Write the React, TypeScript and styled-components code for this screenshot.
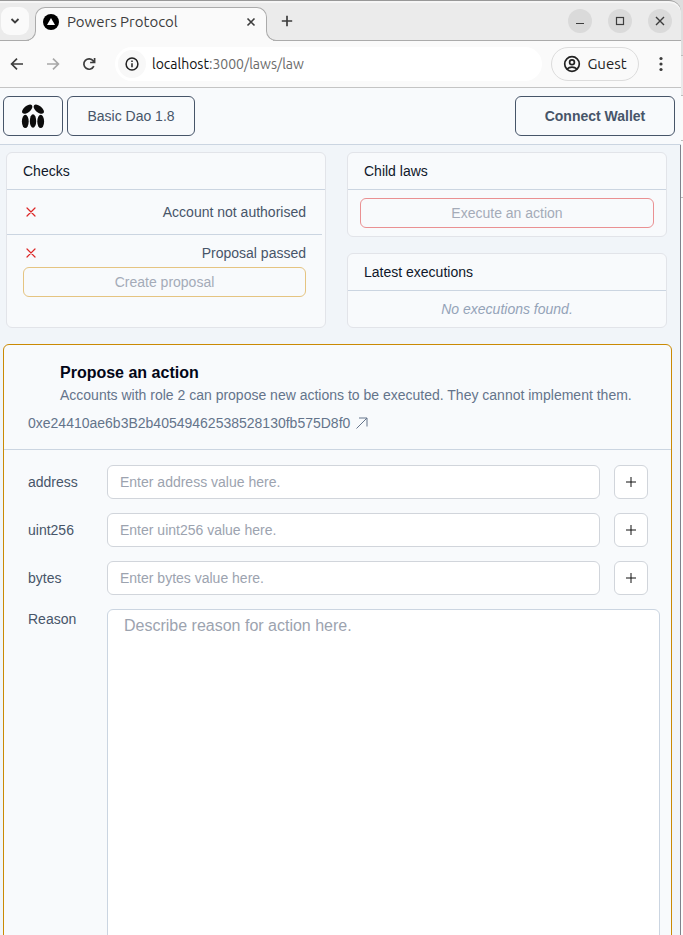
import React from "react";
import styled, { createGlobalStyle, css } from "styled-components";

const slate = {
  50: "#f8fafc",
  100: "#f1f5f9",
  300: "#cbd5e1",
  400: "#94a3b8",
  500: "#64748b",
  600: "#475569",
};
const chrome = {
  strip: "#ebebeb",
  line: "#ababab",
  surface: "#fafafa",
  ink: "#3d3d3d",
};

const GlobalStyle = createGlobalStyle`
  *, *::before, *::after { box-sizing: border-box; }
  body {
    margin: 0;
    background: #fcfcfc;
    font-family: "Liberation Sans", Arial, sans-serif;
    font-size: 14px;
    line-height: 20px;
  }
  button, input, textarea { font: inherit; margin: 0; }
  button { cursor: pointer; padding: 0; }
  h1, h2, p { margin: 0; }
  svg { display: block; flex: none; }
`;

const Desktop = styled.div`
  display: flex;
  height: 100vh;
  overflow: hidden;
  background: #dedede;
`;

const BrowserWindow = styled.div`
  flex: 1;
  min-width: 0;
  display: flex;
  flex-direction: column;
`;

const NeighbourWindow = styled.div`
  width: 2px;
  display: flex;
  flex-direction: column;
  padding-top: 55px;
`;

const NeighbourBand = styled.div<{ $height?: number; $color: string }>`
  ${(p) => (p.$height ? `height: ${p.$height}px;` : "flex: 1;")}
  border-top: 1px solid #bdbdbd;
  background: ${(p) => p.$color};
`;

const BrowserChrome = styled.header`
  font-family: Ubuntu, "Noto Sans", sans-serif;
  color: ${chrome.ink};
  flex: none;
`;

const TabStrip = styled.div`
  display: flex;
  align-items: center;
  height: 41px;
  padding-right: 9px;
  background: ${chrome.strip};
  border-top: 1px solid #989898;
  border-bottom: 1px solid ${chrome.line};
  border-top-right-radius: 12px;
  box-shadow: inset 0 2px 0 #f6f6f6;
`;

const iconButton = css`
  display: flex;
  align-items: center;
  justify-content: center;
  border: 0;
  color: inherit;
  background: transparent;
`;

const TabSearch = styled.button`
  ${iconButton}
  position: relative;
  z-index: 1;
  width: 28px;
  height: 28px;
  margin-left: 1px;
  border-radius: 9px;
  background: ${chrome.surface};
`;

const Tab = styled.div`
  position: relative;
  align-self: flex-end;
  display: flex;
  align-items: center;
  gap: 8px;
  width: 232px;
  height: 34px;
  margin: 0 0 -1px 6px;
  padding: 0 8px 6px 7px;
  font-size: 15px;
  background: ${chrome.surface};
  border: 1px solid ${chrome.line};
  border-bottom: 0;
  border-radius: 10px 10px 0 0;

  &::before,
  &::after {
    content: "";
    position: absolute;
    bottom: 0;
    width: 11px;
    height: 14px;
    background: ${chrome.strip};
    border-bottom: 1px solid ${chrome.line};
  }
  &::before {
    right: 100%;
    border-right: 1px solid ${chrome.line};
    border-bottom-right-radius: 10px;
    box-shadow: 4px 4px 0 ${chrome.surface};
  }
  &::after {
    left: 100%;
    border-left: 1px solid ${chrome.line};
    border-bottom-left-radius: 10px;
    box-shadow: -4px 4px 0 ${chrome.surface};
  }
`;

const TabTitle = styled.span`
  flex: 1;
  white-space: nowrap;
`;

const GlyphButton = styled.button<{ $size?: number; $muted?: boolean }>`
  ${iconButton}
  flex: none;
  width: ${(p) => p.$size ?? 28}px;
  height: ${(p) => p.$size ?? 28}px;
  border-radius: 50%;
  color: ${(p) => (p.$muted ? "#a8a8a8" : "inherit")};
`;

const WindowControls = styled.div`
  display: flex;
  gap: 16px;
  margin-left: auto;
`;

const WindowControl = styled.button`
  ${iconButton}
  width: 24px;
  height: 24px;
  border-radius: 50%;
  background: #dadada;
`;

const Toolbar = styled.div`
  display: flex;
  align-items: center;
  height: 47px;
  padding: 0 6px 0 3px;
  background: ${chrome.surface};
  border-bottom: 1px solid #c4c4c4;
`;

const NavButtons = styled.div`
  display: flex;
  gap: 8px;
  margin-right: 12px;
`;

const AddressBar = styled.div`
  flex: 1;
  min-width: 0;
  display: flex;
  align-items: center;
  gap: 6px;
  height: 34px;
  padding: 0 3px;
  border-radius: 17px;
  background: #fff;
  font-size: 14px;
  color: #6b6b6b;
`;

const SiteInfo = styled(GlyphButton)`
  background: #f8f8f8;
  color: #222;
`;

const Host = styled.span`
  color: #111;
`;

const GuestButton = styled.button`
  ${iconButton}
  gap: 6px;
  width: 88px;
  height: 34px;
  margin: 0 8px 0 9px;
  border: 1px solid #dcdcdc;
  border-radius: 17px;
  font-size: 15px;
  color: #222;
`;

const Page = styled.div`
  flex: 1;
  min-height: 0;
  display: flex;
  flex-direction: column;
  overflow: hidden;
  background: ${slate[100]};
`;

const AppBar = styled.nav`
  flex: none;
  display: flex;
  align-items: center;
  gap: 4px;
  height: 57px;
  padding: 0 6px 0 3px;
  background: ${slate[50]};
  border-bottom: 1px solid ${slate[300]};
`;

const NavButton = styled.button<{ $width: number; $strong?: boolean }>`
  display: flex;
  align-items: center;
  justify-content: center;
  width: ${(p) => p.$width}px;
  height: 40px;
  border: 1px solid ${slate[600]};
  border-radius: 6px;
  background: transparent;
  color: ${slate[600]};
  font-weight: ${(p) => (p.$strong ? 700 : 400)};
  margin-left: ${(p) => (p.$strong ? "auto" : "0")};
`;

const Content = styled.main`
  flex: 1;
  min-height: 0;
  padding: 7px 8px 0 3px;
  border-right: 1px solid #80828c;
`;

const Overview = styled.div`
  display: grid;
  grid-template-columns: 1fr 1fr;
  gap: 21px;
  padding: 0 5px 0 3px;
  margin-bottom: 16px;
`;

const Stack = styled.div`
  display: flex;
  flex-direction: column;
  gap: 16px;
`;

const Card = styled.section`
  background: ${slate[50]};
  border: 1px solid #e2e4e9;
  border-radius: 6px;
`;

const CardTitle = styled.h2`
  height: 37px;
  padding: 8px 16px;
  border-bottom: 1px solid ${slate[300]};
  font-size: 14px;
  font-weight: 400;
  color: #0f172a;
`;

const CheckItem = styled.div<{ $divided?: boolean }>`
  margin-right: 3px;
  padding: ${(p) => (p.$divided ? "12px 16px" : "8px 16px")};
  border-bottom: ${(p) => (p.$divided ? `1px solid ${slate[300]}` : "0")};
`;

const CheckLine = styled.div`
  display: flex;
  align-items: center;
  justify-content: space-between;
  height: 20px;
  color: ${slate[600]};
`;

const ActionButton = styled.button<{ $color: string }>`
  display: block;
  width: 100%;
  height: 30px;
  border: 1px solid ${(p) => p.$color};
  border-radius: 6px;
  background: transparent;
  color: #a4abb8;
`;

const CheckAction = styled.div`
  margin-top: 4px;
`;

const ChildLaws = styled.div`
  padding: 8px 12px;
`;

const EmptyNote = styled.p`
  padding: 8px;
  text-align: center;
  font-style: italic;
  color: ${slate[400]};
`;

const LawCard = styled.section`
  background: ${slate[50]};
  border: 1px solid #ca8a04;
  border-radius: 6px;
`;

const LawHeader = styled.div`
  height: 105px;
  padding: 16px 24px;
  border-bottom: 1px solid ${slate[300]};
  color: ${slate[500]};
`;

const LawSummary = styled.div`
  padding-left: 32px;
  margin-bottom: 8px;
`;

const LawTitle = styled.h1`
  font-size: 16px;
  line-height: 24px;
  font-weight: 700;
  color: #020617;
`;

const ContractLink = styled.a`
  display: inline-flex;
  align-items: center;
  gap: 6px;
  color: inherit;
  text-decoration: none;
`;

const Form = styled.form`
  display: flex;
  flex-direction: column;
  gap: 14px;
  padding: 15px 11px 16px 24px;
`;

const Field = styled.div<{ $tall?: boolean }>`
  display: flex;
  align-items: ${(p) => (p.$tall ? "flex-start" : "center")};
  padding-right: ${(p) => (p.$tall ? 0 : 12)}px;
`;

const FieldLabel = styled.label`
  flex: none;
  width: 79px;
  color: ${slate[600]};
`;

const TextField = styled.input`
  flex: 1;
  min-width: 0;
  height: 34px;
  padding: 0 12px;
  border: 1px solid #d1d5db;
  border-radius: 6px;
  background: #fff;
  &::placeholder { color: #9ca3af; opacity: 1; }
`;

const AddButton = styled.button`
  ${iconButton}
  flex: none;
  width: 34px;
  height: 34px;
  margin-left: 14px;
  border: 1px solid #d1d5db;
  border-radius: 6px;
  background: #fff;
  color: #111;
`;

const ReasonField = styled.textarea`
  flex: 1;
  min-width: 0;
  height: 400px;
  padding: 4px 16px;
  border: 1px solid ${slate[300]};
  border-radius: 6px;
  background: #fff;
  font-size: 16px;
  line-height: 24px;
  resize: none;
  &::placeholder { color: #9ca3af; opacity: 1; }
`;

type StrokeProps = {
  size: number;
  width?: number;
  color?: string;
  children: React.ReactNode;
};

function Stroke({ size, width = 1, color = "currentColor", children }: StrokeProps) {
  return (
    <svg width={size} height={size} viewBox={`0 0 ${size} ${size}`} fill="none" stroke={color} strokeWidth={width} aria-hidden="true">
      {children}
    </svg>
  );
}

const RedCross = () => (
  <Stroke size={16} color="#dc2626" width={1.2}>
    <path d="M4 4l8 8M12 4l-8 8" strokeLinecap="round" />
  </Stroke>
);

const Favicon = () => (
  <svg width="16" height="16" viewBox="0 0 16 16" aria-hidden="true">
    <circle cx="8" cy="8" r="8" fill="#000" />
    <path d="M8 4l4 7H4z" fill="#fff" />
  </svg>
);

const PowersLogo = () => (
  <svg width="24" height="26" viewBox="0 0 24 26" fill="#0c0c0c" aria-hidden="true">
    <ellipse cx="6.2" cy="6.2" rx="6.1" ry="3.3" transform="rotate(-40 6.2 6.2)" />
    <ellipse cx="17.8" cy="6.2" rx="6.1" ry="3.3" transform="rotate(40 17.8 6.2)" />
    <ellipse cx="4.3" cy="18.4" rx="3.4" ry="6.7" />
    <ellipse cx="12" cy="18" rx="3.2" ry="6.7" />
    <ellipse cx="19.7" cy="18.4" rx="3.4" ry="6.7" />
  </svg>
);

function BrowserTop() {
  return (
    <BrowserChrome>
      <TabStrip>
        <TabSearch aria-label="Search tabs">
          <Stroke size={10} width={1.8}><path d="M1.5 3L5 6.500 8.500 3" /></Stroke>
        </TabSearch>
        <Tab>
          <Favicon />
          <TabTitle>Powers Protocol</TabTitle>
          <GlyphButton $size={14} aria-label="Close tab">
            <Stroke size={10} width={1.6}><path d="M1.5 1.5l7 7M8.500 1.500l-7 7" /></Stroke>
          </GlyphButton>
        </Tab>
        <GlyphButton $size={40} aria-label="New tab">
          <Stroke size={12} width={1.7}><path d="M6 .8v10.400M.8 6h10.400" /></Stroke>
        </GlyphButton>
        <WindowControls>
          <WindowControl aria-label="Minimize">
            <Stroke size={10}><path d="M1 7.500h8" /></Stroke>
          </WindowControl>
          <WindowControl aria-label="Maximize">
            <Stroke size={10} width={1.2}><rect x="1.5" y="1.5" width="7" height="7" /></Stroke>
          </WindowControl>
          <WindowControl aria-label="Close">
            <Stroke size={10} width={1.4}><path d="M1 1l8 8M9 1l-8 8" /></Stroke>
          </WindowControl>
        </WindowControls>
      </TabStrip>
      <Toolbar>
        <NavButtons>
          <GlyphButton aria-label="Back">
            <Stroke size={14} width={1.7}><path d="M13 7H2M7 1.600L1.600 7 7 12.400" /></Stroke>
          </GlyphButton>
          <GlyphButton $muted aria-label="Forward">
            <Stroke size={14} width={1.7}><path d="M1 7h11M7 1.600L12.400 7 7 12.400" /></Stroke>
          </GlyphButton>
          <GlyphButton aria-label="Reload">
            <Stroke size={14} width={1.7}>
              <path d="M11.800 9.200A5.200 5.200 0 1 1 11.300 4L12.500 5.300M12.600 1v4.500H8.100" />
            </Stroke>
          </GlyphButton>
        </NavButtons>
        <AddressBar>
          <SiteInfo aria-label="Site information">
            <Stroke size={14} width={1.5}>
              <circle cx="7" cy="7" r="5.9" />
              <path d="M7 6.200v4M7 3.600v1.500" />
            </Stroke>
          </SiteInfo>
          <span><Host>localhost</Host>:3000/laws/law</span>
        </AddressBar>
        <GuestButton>
          <Stroke size={18} width={1.7}>
            <circle cx="9" cy="9" r="7.3" />
            <circle cx="9" cy="7.2" r="2.4" />
            <path d="M4 14c2.800-2.600 7.200-2.600 10 0" />
          </Stroke>
          Guest
        </GuestButton>
        <GlyphButton aria-label="Menu">
          <svg width="4" height="16" viewBox="0 0 4 16" fill="currentColor" aria-hidden="true">
            <circle cx="2" cy="2.5" r="1.6" />
            <circle cx="2" cy="8" r="1.6" />
            <circle cx="2" cy="13.5" r="1.6" />
          </svg>
        </GlyphButton>
      </Toolbar>
    </BrowserChrome>
  );
}

const params = ["address", "uint256", "bytes"];

export default function App() {
  return (
    <Desktop>
      <GlobalStyle />
      <BrowserWindow>
        <BrowserTop />
        <Page>
          <AppBar>
            <NavButton $width={60} aria-label="Home"><PowersLogo /></NavButton>
            <NavButton $width={128}>Basic Dao 1.8</NavButton>
            <NavButton $width={160} $strong>Connect Wallet</NavButton>
          </AppBar>
          <Content>
            <Overview>
              <Card>
                <CardTitle>Checks</CardTitle>
                <CheckItem $divided>
                  <CheckLine><RedCross /><span>Account not authorised</span></CheckLine>
                </CheckItem>
                <CheckItem>
                  <CheckLine><RedCross /><span>Proposal passed</span></CheckLine>
                  <CheckAction>
                    <ActionButton $color="#e5c481">Create proposal</ActionButton>
                  </CheckAction>
                </CheckItem>
              </Card>
              <Stack>
                <Card>
                  <CardTitle>Child laws</CardTitle>
                  <ChildLaws>
                    <ActionButton $color="#ea9092">Execute an action</ActionButton>
                  </ChildLaws>
                </Card>
                <Card>
                  <CardTitle>Latest executions</CardTitle>
                  <EmptyNote>No executions found.</EmptyNote>
                </Card>
              </Stack>
            </Overview>
            <LawCard>
              <LawHeader>
                <LawSummary>
                  <LawTitle>Propose an action</LawTitle>
                  <p>Accounts with role 2 can propose new actions to be executed. They cannot implement them.</p>
                </LawSummary>
                <ContractLink href="#contract">
                  0xe24410ae6b3B2b40549462538528130fb575D8f0
                  <Stroke size={12}><path d="M.5 11.500L11 1M3 1h8v8.500" /></Stroke>
                </ContractLink>
              </LawHeader>
              <Form onSubmit={(e) => e.preventDefault()}>
                {params.map((name) => (
                  <Field key={name}>
                    <FieldLabel htmlFor={name}>{name}</FieldLabel>
                    <TextField id={name} type="text" placeholder={`Enter ${name} value here.`} />
                    <AddButton type="button" aria-label={`Add ${name}`}>
                      <Stroke size={12}><path d="M6 1v10M1 6h10" /></Stroke>
                    </AddButton>
                  </Field>
                ))}
                <Field $tall>
                  <FieldLabel htmlFor="reason">Reason</FieldLabel>
                  <ReasonField id="reason" placeholder="Describe reason for action here." />
                </Field>
              </Form>
            </LawCard>
          </Content>
        </Page>
      </BrowserWindow>
      <NeighbourWindow>
        <NeighbourBand $height={40} $color="#eaeaea" />
        <NeighbourBand $height={45} $color="#fafafa" />
        <NeighbourBand $height={57} $color="#fafafa" />
        <NeighbourBand $color="#fcfcfc" />
      </NeighbourWindow>
    </Desktop>
  );
}
